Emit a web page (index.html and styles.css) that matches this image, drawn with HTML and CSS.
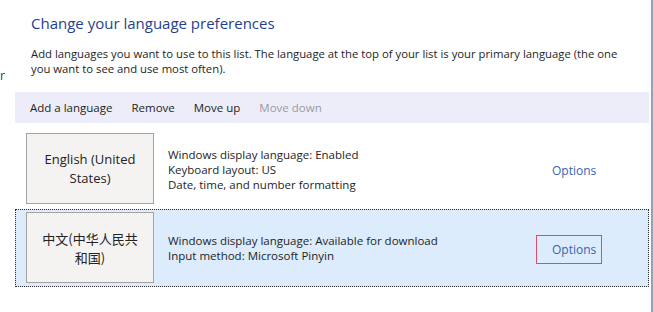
FILE: index.html
```html
<!DOCTYPE html>
<html lang="en">
<head>
<meta charset="utf-8">
<title>Language</title>
<link rel="stylesheet" href="styles.css">
</head>
<body>
<div class="window">
  <aside class="side"><span class="side-link">Change date, time, or number formats for</span></aside>
  <main class="main">
    <h1 class="title">Change your language preferences</h1>
    <p class="desc">Add languages you want to use to this list. The language at the top of your list is your primary language (the one<br>you want to see and use most often).</p>
    <nav class="toolbar">
      <span class="tool">Add a language</span>
      <span class="tool">Remove</span>
      <span class="tool">Move up</span>
      <span class="tool disabled">Move down</span>
    </nav>
    <ul class="langs">
      <li class="lang">
        <div class="lang-btn">English (United<br>States)</div>
        <div class="info">Windows display language: Enabled<br>Keyboard layout: US<br>Date, time, and number formatting</div>
        <div class="opts"><span class="opt-link">Options</span></div>
      </li>
      <li class="lang selected">
        <div class="lang-btn cjk">中文(中华人民共<br>和国)</div>
        <div class="info">Windows display language: Available for download<br>Input method: Microsoft Pinyin</div>
        <div class="opts"><span class="opt-link focused">Options</span></div>
      </li>
    </ul>
  </main>
  <div class="edge"></div>
</div>
</body>
</html>
```

FILE: styles.css
```css
html, body {
  margin: 0;
  padding: 0;
  background: #ffffff;
}

body {
  font-family: "Open Sans", "Noto Sans", "Noto Sans CJK SC", sans-serif;
  font-size: 11.5px;
  color: #1e1e1e;
}

.window {
  display: flex;
  width: 653px;
  height: 312px;
  overflow: hidden;
}

.side {
  width: 5px;
  flex: none;
  overflow: hidden;
  direction: rtl;
  padding-top: 68px;
}

.side-link {
  white-space: nowrap;
  color: #1c3a6a;
  font-size: 12px;
  line-height: 15px;
  direction: ltr;
  unicode-bidi: bidi-override;
  display: inline-block;
}

.main {
  flex: 1;
  padding: 12px 2px 0 10px;
  min-width: 0;
}

.edge {
  width: 2px;
  flex: none;
  background: #5db7d6;
}

.title {
  margin: 0 0 0 16px;
  font-size: 15px;
  line-height: 22px;
  font-weight: normal;
  color: #1f3f8f;
  white-space: nowrap;
}

.desc {
  margin: 12px 0 0 16px;
  font-size: 11.3px;
  line-height: 15px;
  white-space: nowrap;
  color: #1e1e1e;
}

.toolbar {
  margin-top: 16px;
  height: 31px;
  background: #ededf9;
  display: flex;
  align-items: center;
  gap: 19px;
  padding-left: 15px;
  color: #1e1e1e;
}

.tool.disabled {
  color: #9a9aa4;
}

.langs {
  list-style: none;
  margin: 7px 0 0 0;
  padding: 0;
  display: flex;
  flex-direction: column;
  gap: 1px;
}

.lang {
  height: 78px;
  box-sizing: border-box;
  border: 1px dotted transparent;
  padding: 2px 0 0 10px;
  display: flex;
  align-items: flex-start;
}

.lang.selected {
  background: #dcecfc;
  border-color: #2a2a2a;
}

.lang-btn {
  width: 128px;
  height: 71px;
  box-sizing: border-box;
  border: 1px solid #a3a3a3;
  background: #f5f2f2;
  display: flex;
  align-items: center;
  justify-content: center;
  text-align: center;
  font-size: 13px;
  line-height: 19px;
  color: #222222;
  flex: none;
}

.lang-btn.cjk {
  font-family: "Noto Sans CJK SC", sans-serif;
  font-size: 13px;
}

.info {
  flex: 1;
  align-self: center;
  margin-left: 14px;
  margin-top: -2px;
  line-height: 15px;
  white-space: nowrap;
}

.opts {
  align-self: center;
  margin-right: 46px;
  flex: none;
}

.opt-link {
  display: block;
  width: 66px;
  height: 29px;
  box-sizing: border-box;
  border: 1px solid transparent;
  padding-left: 15px;
  line-height: 27px;
  font-size: 12px;
  color: #3764b4;
}

.opt-link.focused {
  border-color: #d9506f;
}
```
